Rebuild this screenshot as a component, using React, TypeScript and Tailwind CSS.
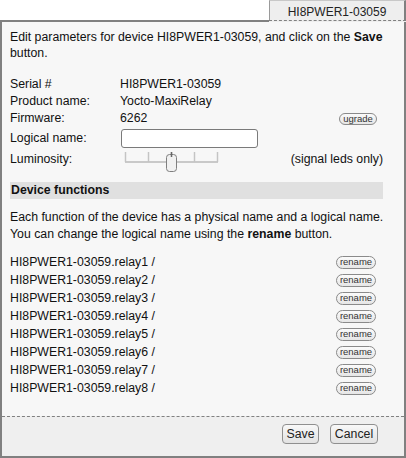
const relays = [1, 2, 3, 4, 5, 6, 7, 8];

const PillButton = ({ label, className }: { label: string; className?: string }) => (
  <button
    className={
      "flex items-center justify-center rounded-full border border-[#8a8a8a] bg-gradient-to-b from-[#fbfbfb] to-[#e6e6e6] text-[9.5px] leading-none text-[#333] " +
      (className ?? "")
    }
  >
    {label}
  </button>
);

const LuminositySlider = () => (
  <svg width="96" height="24" viewBox="0 0 96 24" className="block">
    <line x1="1" y1="12" x2="94" y2="12" stroke="#c9c9c9" strokeWidth="2" />
    {[1, 24, 47, 70, 93].map((x) => (
      <line key={x} x1={x + 0.5} y1="2" x2={x + 0.5} y2="12" stroke="#c4c4c4" strokeWidth="1.5" />
    ))}
    <rect x="42.5" y="4.5" width="10" height="17" rx="3" fill="#f1f1f1" stroke="#7f7f7f" />
    <line x1="47.5" y1="2" x2="47.5" y2="7" stroke="#666" strokeWidth="1.5" />
  </svg>
);

export default function App() {
  return (
    <div className="w-[406px] h-[458px] bg-white font-['Liberation_Sans',Arial,sans-serif] text-[12.3px] text-[#111]">
      <div className="flex h-[22px]">
        <div className="flex-1 border-b-2 border-[#808080]" />
        <div className="w-[137px] border-t border-l border-r-2 border-t-[#c8c8c8] border-l-[#9a9a9a] border-r-[#808080] bg-[#eeeeee] flex items-start justify-center pt-[2px] text-[12px] text-[#222]">
          HI8PWER1-03059
        </div>
      </div>
      <div className="h-[436px] border-x-2 border-b-2 border-[#808080] flex flex-col">
        <div className="relative flex-1 bg-[#f7f7f7] pl-2 pr-[21px]">
          <div className="absolute left-[-2px] right-[-2px] top-[-2px] h-[2px] flex">
            <div className="flex-1 bg-[#808080]" />
            <div className="w-[137px] border-t border-dashed border-[#808080] bg-[#eeeeee]" />
          </div>
          <p className="pt-[7px] leading-[16px] whitespace-nowrap">
            Edit parameters for device HI8PWER1-03059, and click on the <b>Save</b>
            <br />
            button.
          </p>
          <div className="mt-[14px]">
            <div className="flex h-[18px] items-center">
              <span className="w-[110px]">Serial #</span>
              <span>HI8PWER1-03059</span>
            </div>
            <div className="flex h-[17px] items-center">
              <span className="w-[110px]">Product name:</span>
              <span>Yocto-MaxiRelay</span>
            </div>
            <div className="flex h-[17px] items-center">
              <span className="w-[110px]">Firmware:</span>
              <span className="flex-1">6262</span>
              <PillButton label="ugrade" className="w-[38px] h-[12px] mr-[6px]" />
            </div>
            <div className="flex h-[22px] items-center">
              <span className="w-[110px]">Logical name:</span>
              <input
                type="text"
                className="ml-[1px] w-[137px] h-[19px] rounded-[3px] border border-[#7a7a7a] bg-white outline-none"
              />
            </div>
            <div className="flex h-[20px] items-center">
              <span className="w-[110px]">Luminosity:</span>
              <div className="flex-1 pl-[4px] pt-[6px]">
                <LuminositySlider />
              </div>
              <span>(signal leds only)</span>
            </div>
          </div>
          <div className="mt-[13px] h-[17px] bg-[#e0e0e0] pl-[1px] flex items-center font-bold">
            Device functions
          </div>
          <p className="mt-[10px] leading-[17px] whitespace-nowrap">
            Each function of the device has a physical name and a logical name.
            <br />
            You can change the logical name using the <b>rename</b> button.
          </p>
          <div className="mt-[10px]">
            {relays.map((n) => (
              <div key={n} className="flex h-[18px] items-center justify-between">
                <span>HI8PWER1-03059.relay{n} /</span>
                <PillButton label="rename" className="w-[40px] h-[13px] mr-[7px]" />
              </div>
            ))}
          </div>
        </div>
        <div className="h-[40px] border-t border-dashed border-[#808080] bg-[#efefef] flex items-start justify-end gap-[11px] pt-[7px] pr-[26px]">
          <button className="w-[37px] h-[20px] rounded-[4px] border border-[#8f8f8f] bg-gradient-to-b from-[#f8f8f8] to-[#e2e2e2] text-[12.3px] text-[#222]">
            Save
          </button>
          <button className="w-[48px] h-[20px] rounded-[4px] border border-[#8f8f8f] bg-gradient-to-b from-[#f8f8f8] to-[#e2e2e2] text-[12.3px] text-[#222]">
            Cancel
          </button>
        </div>
      </div>
    </div>
  );
}
